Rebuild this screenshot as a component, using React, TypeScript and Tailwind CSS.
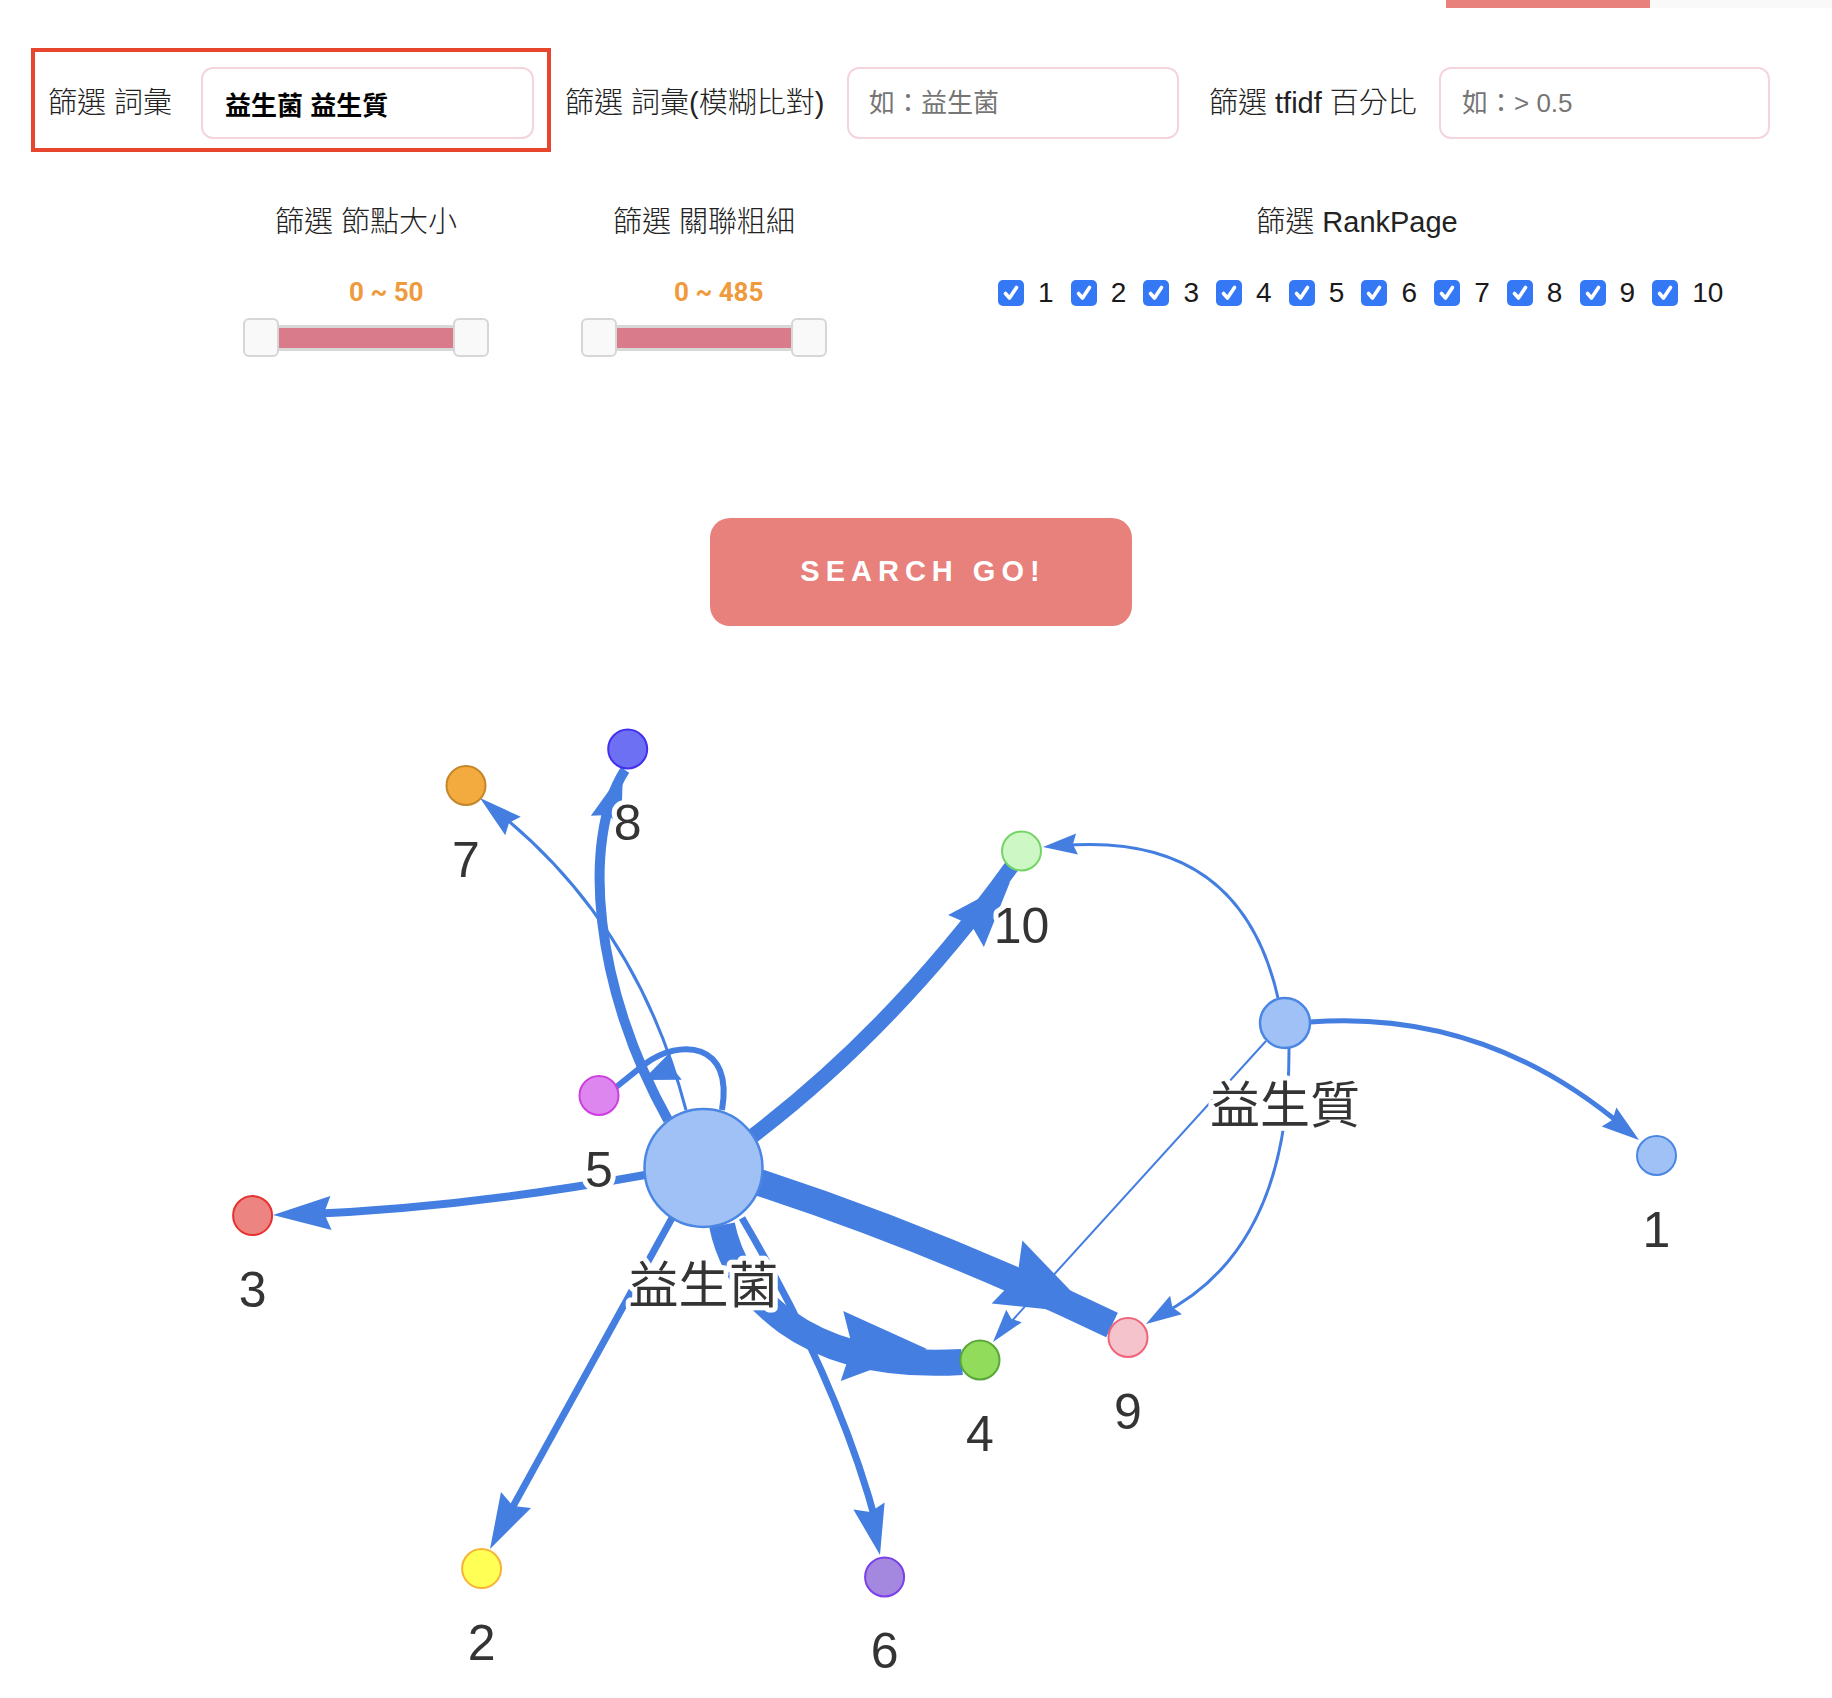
import React from "react";

type P = [number, number];

const EDGE = "#437ee0";

function arrowPts(t: P, b: P, w: number) {
  const dx = t[0] - b[0];
  const dy = t[1] - b[1];
  const len = Math.hypot(dx, dy);
  const ux = dx / len;
  const uy = dy / len;
  const nx = -uy;
  const ny = ux;
  const notch: P = [t[0] - ux * len * 0.88, t[1] - uy * len * 0.88];
  return `${t[0]},${t[1]} ${b[0] + nx * w},${b[1] + ny * w} ${notch[0]},${notch[1]} ${b[0] - nx * w},${b[1] - ny * w}`;
}

type Edge = { d: string; w: number; t: P; b: P; aw: number };

const edges: Edge[] = [
  { d: "M 645 1175 Q 458 1209 290 1215", w: 8, t: [273, 1215], b: [331, 1213], aw: 17 },
  { d: "M 672 1218 Q 583 1380 500 1530", w: 7, t: [490, 1549], b: [516, 1500], aw: 17 },
  { d: "M 742 1218 Q 841 1386 878 1530", w: 7, t: [880, 1555], b: [869, 1506], aw: 16 },
  { d: "M 722 1225 C 735 1290 800 1372 962 1362", w: 26, t: [927, 1349], b: [842, 1346], aw: 35 },
  { d: "M 758 1182 Q 935 1240 1112 1325", w: 27, t: [1093, 1314], b: [1007, 1272], aw: 35 },
  { d: "M 750 1138 Q 895 1028 1012 866", w: 15, t: [1010, 882], b: [966, 931], aw: 24 },
  { d: "M 668 1120 C 595 990 580 840 625 770", w: 10, t: [623, 771], b: [606, 821], aw: 16 },
  { d: "M 686 1110 Q 636 919 490 806", w: 3, t: [480, 798], b: [513, 826], aw: 12 },
  { d: "M 722 1110 C 734 1042 680 1038 645 1064 L 615 1088", w: 6, t: [643, 1080], b: [676, 1066], aw: 15 },
  { d: "M 1278 998 Q 1240 830 1060 846", w: 3, t: [1043, 847], b: [1077, 844], aw: 10.5 },
  { d: "M 1310 1022 Q 1485 1009 1625 1128", w: 5, t: [1639, 1140], b: [1609, 1117], aw: 12 },
  { d: "M 1289 1048 Q 1290 1250 1160 1315", w: 3, t: [1146, 1324], b: [1176, 1305], aw: 11 },
  { d: "M 1266 1041 L 1000 1334", w: 2, t: [993, 1342], b: [1014, 1316], aw: 10 },
];

type Node = { x: number; y: number; r: number; fill: string; stroke: string; sw: number };

const nodes: Node[] = [
  { x: 703.5, y: 1168, r: 59, fill: "#a0c1f6", stroke: "#4b86e3", sw: 2.5 },
  { x: 1285, y: 1023, r: 25, fill: "#a0c1f6", stroke: "#4b86e3", sw: 2.5 },
  { x: 1656.5, y: 1155.5, r: 19.5, fill: "#a0c1f6", stroke: "#4b86e3", sw: 2 },
  { x: 481.6, y: 1568.6, r: 19.5, fill: "#ffff55", stroke: "#f7b336", sw: 2 },
  { x: 252.6, y: 1215.6, r: 19.5, fill: "#ec8582", stroke: "#e6312f", sw: 2 },
  { x: 980, y: 1360, r: 19.5, fill: "#91dc5a", stroke: "#5aa63a", sw: 2 },
  { x: 599, y: 1095.5, r: 19.5, fill: "#de86ef", stroke: "#cd3fdf", sw: 2 },
  { x: 884.6, y: 1577, r: 19.5, fill: "#a487df", stroke: "#7b3fe8", sw: 2 },
  { x: 466, y: 785.5, r: 19.5, fill: "#f3ab3f", stroke: "#c4862a", sw: 2 },
  { x: 627.7, y: 749, r: 19.5, fill: "#6d70f3", stroke: "#4330ee", sw: 2 },
  { x: 1128, y: 1337.5, r: 19.5, fill: "#f4c3cb", stroke: "#ee6478", sw: 2 },
  { x: 1021.5, y: 851, r: 19.5, fill: "#cdf7c5", stroke: "#74d466", sw: 2 },
];

const labels: { x: number; y: number; t: string }[] = [
  { x: 703.5, y: 1303, t: "益生菌" },
  { x: 1285, y: 1123, t: "益生質" },
  { x: 1656.5, y: 1247, t: "1" },
  { x: 481.6, y: 1660, t: "2" },
  { x: 252.6, y: 1307, t: "3" },
  { x: 980, y: 1451, t: "4" },
  { x: 599, y: 1187, t: "5" },
  { x: 884.6, y: 1668, t: "6" },
  { x: 466, y: 877, t: "7" },
  { x: 627.7, y: 840, t: "8" },
  { x: 1128, y: 1429, t: "9" },
  { x: 1021.5, y: 943, t: "10" },
];

function Slider() {
  return (
    <div className="mt-[10px] flex h-[39px] items-center">
      <div className="h-[39px] w-[36px] shrink-0 rounded-[6px] border-2 border-[#d6d6d6] bg-[#f9f9f9]" />
      <div className="h-[26px] flex-1 border-y-[3px] border-[#d8d8d8] bg-[#d97b8a]" />
      <div className="h-[39px] w-[36px] shrink-0 rounded-[6px] border-2 border-[#d6d6d6] bg-[#f9f9f9]" />
    </div>
  );
}

function Check({ n }: { n: number }) {
  return (
    <div className="flex w-[72.7px] shrink-0 items-center">
      <div className="flex h-[26px] w-[26px] shrink-0 items-center justify-center rounded-[5px] bg-[#3478f6]">
        <svg width="20" height="20" viewBox="0 0 20 20">
          <path d="M4.5 10.5 L8.5 15 L15.5 4.5" fill="none" stroke="white" strokeWidth="3.6" strokeLinecap="round" strokeLinejoin="round" />
        </svg>
      </div>
      <span className="ml-[14px] text-[28px] leading-[32px] font-light text-[#1a1a1a]">{n}</span>
    </div>
  );
}

export default function App() {
  return (
    <div className="h-[1698px] w-[1832px] overflow-hidden bg-white font-['Liberation_Sans','Noto_Sans_CJK_TC',sans-serif] text-[#222]">
      <div className="flex h-[8px]">
        <div className="ml-[1446px] w-[204px] bg-[#e8807c]" />
        <div className="flex-1 bg-[#f9f9f9]" />
      </div>

      <div className="mt-[40px] flex pl-[31px]">
        <div className="flex h-[104px] items-center border-4 border-[#e8452f] pl-[13px] pr-[13px] pt-[6px]">
          <span className="w-[153px] shrink-0 text-[29px] font-light leading-[40px]">篩選 詞彙</span>
          <input
            readOnly
            value="益生菌 益生質"
            className="h-[72px] w-[333px] rounded-[12px] border-2 border-[#f4d5db] bg-white pl-[22px] text-[26px] font-bold text-black outline-none"
          />
        </div>
        <div className="ml-[14px] flex h-[104px] items-center pt-[6px]">
          <span className="w-[282px] shrink-0 text-[29px] font-light leading-[40px]">篩選 詞彙(模糊比對)</span>
          <input
            readOnly
            placeholder="如：益生菌"
            className="h-[72px] w-[332px] rounded-[12px] border-2 border-[#f4d5db] bg-white pl-[20px] text-[26px] text-black outline-none placeholder:text-[#757575]"
          />
        </div>
        <div className="ml-[30px] flex h-[104px] items-center pt-[6px]">
          <span className="w-[230px] shrink-0 text-[29px] font-light leading-[40px]">篩選 tfidf 百分比</span>
          <input
            readOnly
            placeholder="如：> 0.5"
            className="h-[72px] w-[331px] rounded-[12px] border-2 border-[#f4d5db] bg-white pl-[21px] text-[26px] text-black outline-none placeholder:text-[#757575]"
          />
        </div>
      </div>

      <div className="mt-[50px] flex pl-[243px]">
        <div className="flex w-[246px] shrink-0 flex-col">
          <div className="text-center text-[29px] font-light leading-[40px]">篩選 節點大小</div>
          <div className="mt-[34px] pl-[106px] font-['Roboto',sans-serif] text-[26px] font-bold leading-[32px] text-[#ef9a3c]">0 ~ 50</div>
          <Slider />
        </div>
        <div className="ml-[92px] flex w-[246px] shrink-0 flex-col">
          <div className="text-center text-[29px] font-light leading-[40px]">篩選 關聯粗細</div>
          <div className="mt-[34px] pl-[93px] font-['Roboto',sans-serif] text-[26px] font-bold leading-[32px] text-[#ef9a3c]">0 ~ 485</div>
          <Slider />
        </div>
        <div className="ml-[169px] flex w-[728px] shrink-0 flex-col">
          <div className="pr-[6px] text-center text-[29px] font-light leading-[40px]">篩選 RankPage</div>
          <div className="mt-[31px] flex h-[40px] items-center pl-[2px]">
            {[1, 2, 3, 4, 5, 6, 7, 8, 9, 10].map((n) => (
              <Check key={n} n={n} />
            ))}
          </div>
        </div>
      </div>

      <button className="ml-[710px] mt-[161px] flex h-[108px] w-[422px] items-center justify-center rounded-[20px] bg-[#e8807c] pl-[4px] font-['Liberation_Sans',sans-serif] text-[29px] font-bold tracking-[6px] text-white">
        SEARCH GO!
      </button>

      <svg width="1832" height="1072" viewBox="0 626 1832 1072" className="block">
        {edges.map((e, i) => (
          <g key={i}>
            <path d={e.d} fill="none" stroke={EDGE} strokeWidth={e.w} strokeLinecap="butt" />
            <polygon points={arrowPts(e.t, e.b, e.aw)} fill={EDGE} />
          </g>
        ))}
        {nodes.map((n, i) => (
          <circle key={i} cx={n.x} cy={n.y} r={n.r} fill={n.fill} stroke={n.stroke} strokeWidth={n.sw} />
        ))}
        {labels.map((l, i) => (
          <text
            key={i}
            x={l.x}
            y={l.y}
            textAnchor="middle"
            fontSize="50"
            fill="#343434"
            stroke="white"
            strokeWidth="10"
            strokeLinejoin="round"
            paintOrder="stroke"
            style={{ fontFamily: "'Liberation Sans', 'Noto Sans CJK TC', sans-serif" }}
          >
            {l.t}
          </text>
        ))}
      </svg>
    </div>
  );
}
